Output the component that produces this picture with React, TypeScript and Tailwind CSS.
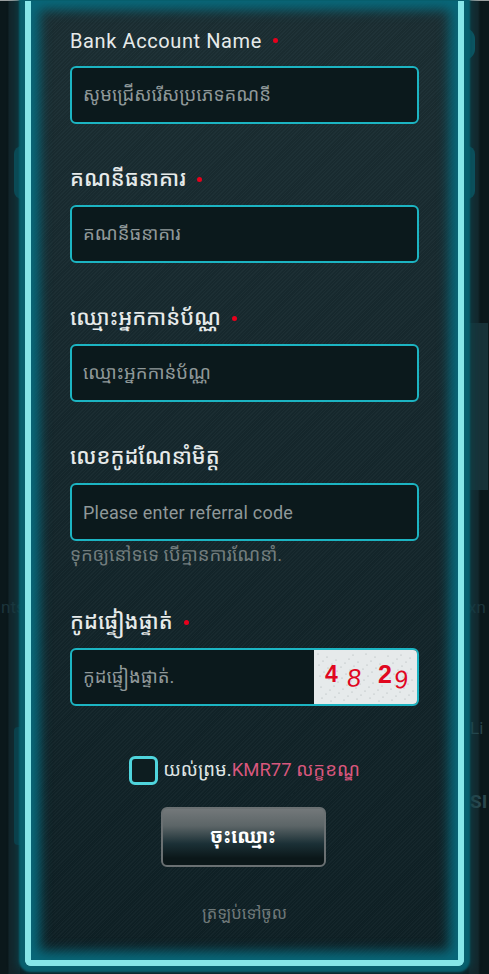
const kh = 'font-["Roboto","Noto_Sans_Khmer","Noto_Sans","Liberation_Sans",sans-serif]'

// captcha noise dots, fixed so the picture is stable
const dots = Array.from({ length: 90 }, (_, i) => ({
  x: 4 + (i * 37) % 96,
  y: 4 + (i * 23) % 48,
}))

function Label({ text, req = true, latin = false }: { text: string; req?: boolean; latin?: boolean }) {
  return (
    <div className={`flex h-[26px] items-center gap-[11px] leading-[26px] text-[#e6eaea] ${latin ? 'pt-px text-[20px] tracking-[0.6px]' : 'text-[21.5px] font-medium'}`}>
      <span>{text}</span>
      {req && <span className="h-[5px] w-[5px] rounded-full bg-[#e8001c]" />}
    </div>
  )
}

function Field({ holder, latin = false }: { holder: string; latin?: boolean }) {
  return (
    <div className={`flex h-[58px] items-center rounded-[6px] border-2 border-[#1cb4c2] bg-[#0b191c] px-[11px] text-[#8f9899] ${latin ? 'text-[18px] tracking-[0.2px]' : 'pt-[2px] text-[18.5px]'}`}>
      {holder}
    </div>
  )
}

export default function App() {
  return (
    <div className={`relative h-[974px] w-[489px] overflow-hidden bg-[linear-gradient(90deg,#0b181b_0px,#0b181b_8px,#13252a_9px,#13252a_20px,#0b181b_20px,#0b181b_468px,#14262b_470px,#14262b_478px,#0b181b_480px)] ${kh}`}>
      <div className="h-px w-full bg-[#9a9f9f]" />

      {/* blurred page behind the panel, only the strips at the sides show */}
      <div className="absolute top-[146px] left-[14px] h-[53px] w-[11px] rounded-l-[8px] bg-[#0c4c58]" />
      <div className="absolute top-[727px] left-[14px] h-[118px] w-[11px] rounded-l-[4px] bg-[#0c3f4a]" />
      <div className="absolute top-[28px] left-[464px] h-[32px] w-[11px] rounded-r-full bg-[#0c5a68]" />
      <div className="absolute top-[146px] left-[464px] h-[53px] w-[11px] rounded-r-[8px] bg-[#0c5360]" />
      <div className="absolute top-[323px] left-[464px] h-[167px] w-[24px] bg-[#183238]" />
      <span className="absolute top-[595px] left-[1px] text-[17px] text-[#1d353b]">nts</span>
      <span className="absolute top-[595px] left-[468px] text-[17px] text-[#1d353b]">xn</span>
      <span className="absolute top-[716px] left-[470px] text-[17px] text-[#2a464c]">Li</span>
      <span className="absolute top-[788px] left-[470px] text-[19px] font-bold text-[#2a464c]">SI</span>

      <div className="relative ml-[25px] flex h-[965px] w-[439px] flex-col rounded-b-[6px] border-x-[6px] border-b-[6px] border-[#86e6e8] bg-[repeating-linear-gradient(135deg,rgba(255,255,255,0.02)_0px,rgba(255,255,255,0.02)_1px,rgba(0,0,0,0.05)_1px,rgba(0,0,0,0.05)_2.5px),linear-gradient(180deg,#1c2f34,#0f2126)] px-[39px] pt-[26px] shadow-[0_0_2px_6px_#075f6d,0_0_8px_9px_rgba(10,70,80,0.6),inset_0_0_12px_9px_#08687a]">
        <Label text="Bank Account Name" latin />
        <div className="mt-[13px]"><Field holder="សូមជ្រើសរើសប្រភេទគណនី" /></div>

        <div className="mt-[42px]"><Label text="គណនីធនាគារ" /></div>
        <div className="mt-[13px]"><Field holder="គណនីធនាគារ" /></div>

        <div className="mt-[42px]"><Label text="ឈ្មោះអ្នកកាន់ប័ណ្ណ" /></div>
        <div className="mt-[13px]"><Field holder="ឈ្មោះអ្នកកាន់ប័ណ្ណ" /></div>

        <div className="mt-[42px]"><Label text="លេខកូដណែនាំមិត្ត" req={false} /></div>
        <div className="mt-[13px]"><Field holder="Please enter referral code" latin /></div>
        <p className="mt-[2px] h-[24px] text-[18.5px] leading-[24px] text-[#727d7e]">ទុកឲ្យនៅទទេ បើគ្មានការណែនាំ.</p>

        <div className="mt-[42px]"><Label text="កូដផ្ទៀងផ្ទាត់" /></div>
        <div className="mt-[13px] flex h-[58px] overflow-hidden rounded-[6px] border-2 border-[#1cb4c2] bg-[#0b191c]">
          <div className="flex flex-1 items-center px-[11px] pt-[2px] text-[18.5px] text-[#8f9899]">កូដផ្ទៀងផ្ទាត់.</div>
          <div className="relative flex w-[103px] items-center bg-[#e6eaeb] pl-[11px] text-[#e0071f] font-['Liberation_Sans',sans-serif]">
            <svg className="absolute inset-0" width="103" height="54">
              {dots.map((d, i) => <circle key={i} cx={d.x} cy={d.y} r="0.5" fill="#9aa3a6" />)}
            </svg>
            <span className="relative -mt-[6px] w-[22px] text-[23px] font-bold">4</span>
            <span className="relative mt-[2px] w-[31px] -rotate-[4deg] text-[25px] italic">8</span>
            <span className="relative -mt-[4px] w-[16px] text-[25px] font-bold">2</span>
            <span className="relative mt-[6px] -rotate-[8deg] text-[25px] italic">9</span>
          </div>
        </div>

        <div className="mt-[49px] flex h-[30px] items-center justify-center gap-[5px] text-[18.5px] text-[#dfe4e4]">
          <span className="h-[29px] w-[29px] rounded-[6px] border-[3px] border-[#4fd4dc] bg-[#0d1d20]" />
          <span className="pt-px">យល់ព្រម.<span className="text-[#d9577d]">KMR77 លក្ខខណ្ឌ</span></span>
        </div>

        <div className="mt-[22px] flex justify-center pr-[3px]">
          <button className="flex h-[60px] w-[165px] items-center justify-center rounded-[6px] border-2 border-[#6a7072] bg-[linear-gradient(180deg,#73787a_0%,#5c6567_30%,#1b3036_62%,#0b1719_88%)] text-[19.5px] font-bold text-white">ចុះឈ្មោះ</button>
        </div>

        <p className="mt-[35px] text-center text-[16.5px] text-[#6e7879]">ត្រឡប់ទៅចូល</p>
      </div>
    </div>
  )
}
